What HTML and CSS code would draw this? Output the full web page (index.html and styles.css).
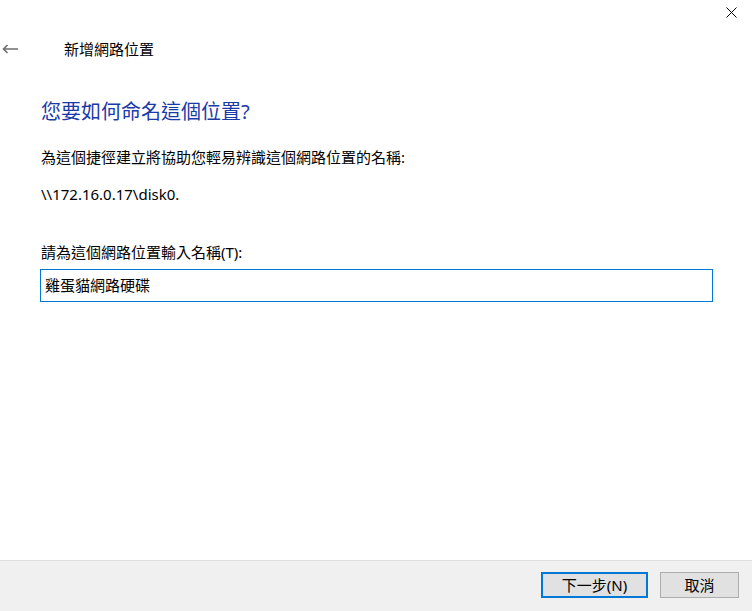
FILE: index.html
```html
<!DOCTYPE html>
<html lang="zh-Hant">
<head>
<meta charset="utf-8">
<title>新增網路位置</title>
<link rel="stylesheet" href="styles.css">
</head>
<body>
<div class="window">
  <button class="close" aria-label="關閉">
    <svg width="11" height="11" viewBox="0 0 11 11"><path d="M0.5 0.5 L10.5 10.5 M10.5 0.5 L0.5 10.5" stroke="#000" stroke-width="1" fill="none"/></svg>
  </button>
  <div class="main">
    <div class="nav">
      <span class="back">
        <svg width="16" height="10" viewBox="0 0 16 10"><path d="M16 5 H1.5 M5.5 1 L1.5 5 L5.5 9" stroke="#6e6e6e" stroke-width="1.6" fill="none"/></svg>
      </span>
      <span class="nav-title">新增網路位置</span>
    </div>
    <div class="content">
      <h1 class="heading">您要如何命名這個位置?</h1>
      <p class="desc">為這個捷徑建立將協助您輕易辨識這個網路位置的名稱:</p>
      <p class="path">\\172.16.0.17\disk0.</p>
      <label class="label" for="name">請為這個網路位置輸入名稱(T):</label>
      <input class="name-input" id="name" type="text" value="雞蛋貓網路硬碟">
    </div>
  </div>
  <div class="footer">
    <button class="btn btn-primary">下一步(N)</button>
    <button class="btn">取消</button>
  </div>
</div>
</body>
</html>
```
FILE: styles.css
```css
* { box-sizing: border-box; }
html, body {
  margin: 0;
  padding: 0;
  background: #fff;
}
body {
  font-family: "Noto Sans", "Noto Sans CJK TC", sans-serif;
  font-size: 15px;
  color: #000;
}
.window {
  position: relative;
  width: 752px;
  height: 611px;
  display: flex;
  flex-direction: column;
}
.close {
  position: absolute;
  top: 7px;
  left: 726px;
  width: 11px;
  height: 11px;
  padding: 0;
  border: 0;
  background: transparent;
  display: block;
}
.close svg { display: block; }
.main {
  flex: 1;
  padding-top: 34px;
}
.nav {
  height: 30px;
  display: flex;
  align-items: center;
}
.back {
  width: 64px;
  padding-left: 2px;
  display: flex;
  align-items: center;
}
.back svg { display: block; }
.nav-title {
  line-height: 30px;
  font-family: "Noto Sans CJK TC", sans-serif;
}
.content {
  padding-left: 41px;
  display: flex;
  flex-direction: column;
  align-items: flex-start;
}
.heading {
  margin: 34px 0 0;
  font-size: 20px;
  line-height: 28px;
  font-weight: normal;
  color: #1a3aa8;
  font-family: "Noto Sans", "Noto Sans CJK TC", sans-serif;
}
.desc {
  margin: 21px 0 0;
  line-height: 20px;
}
.path {
  margin: 17px 0 0;
  line-height: 20px;
}
.label {
  margin-top: 38px;
  line-height: 21px;
}
.name-input {
  margin: 6px 0 0 -1px;
  width: 673px;
  height: 33px;
  border: 1px solid #0078d7;
  padding: 0 4px 2px;
  font: inherit;
  font-family: "Noto Sans CJK TC", sans-serif;
  color: #000;
  outline: none;
  background: #fff;
}
.footer {
  height: 51px;
  background: #f0f0f0;
  border-top: 1px solid #dfdfdf;
  display: flex;
  justify-content: flex-end;
  align-items: flex-start;
  gap: 12px;
  padding: 11px 13px 0 0;
}
.btn {
  height: 26px;
  width: 79px;
  background: #e1e1e1;
  border: 1px solid #adadad;
  font: inherit;
  font-size: 15px;
  color: #000;
  padding: 0;
  line-height: 22px;
}
.btn-primary {
  width: 107px;
  border: 2px solid #0078d7;
}
```
